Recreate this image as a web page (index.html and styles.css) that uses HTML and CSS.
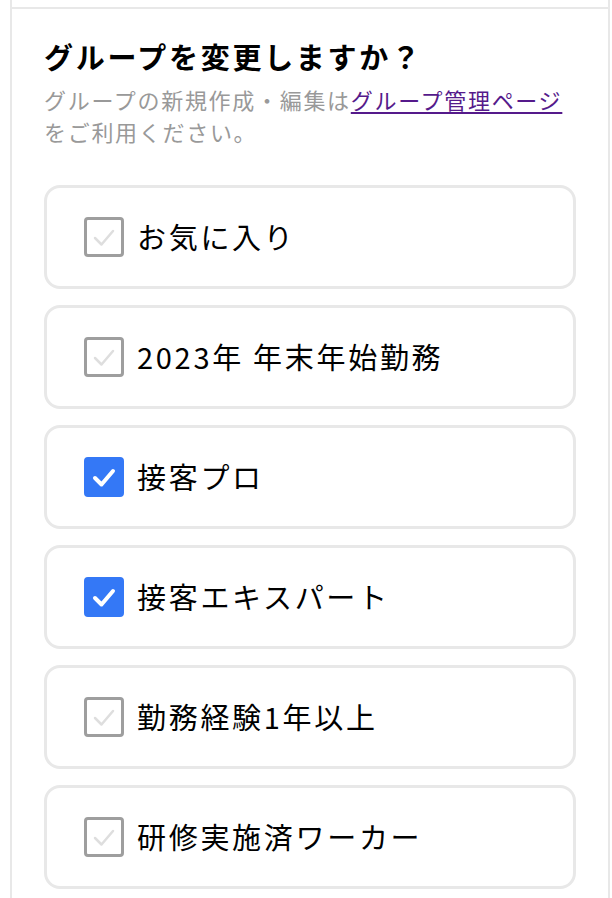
FILE: index.html
```html
<!DOCTYPE html>
<html lang="ja">
<head>
<meta charset="utf-8">
<title>グループを変更しますか？</title>
<link rel="stylesheet" href="styles.css">
</head>
<body>
<div class="frame">
  <section class="panel">
    <h1 class="title">グループを変更しますか？</h1>
    <p class="desc">グループの新規作成・編集は<a class="link" href="#">グループ管理ページ</a>をご利用ください。</p>
    <ul class="groups">
      <li class="card">
        <span class="box"><svg viewBox="0 0 40 40"><path d="M11 21 L17.5 27.5 L29 14" /></svg></span>
        <span class="label">お気に入り</span>
      </li>
      <li class="card">
        <span class="box"><svg viewBox="0 0 40 40"><path d="M11 21 L17.5 27.5 L29 14" /></svg></span>
        <span class="label">2023年 年末年始勤務</span>
      </li>
      <li class="card">
        <span class="box checked"><svg viewBox="0 0 40 40"><path d="M11 21 L17.5 27.5 L29 14" /></svg></span>
        <span class="label">接客プロ</span>
      </li>
      <li class="card">
        <span class="box checked"><svg viewBox="0 0 40 40"><path d="M11 21 L17.5 27.5 L29 14" /></svg></span>
        <span class="label">接客エキスパート</span>
      </li>
      <li class="card">
        <span class="box"><svg viewBox="0 0 40 40"><path d="M11 21 L17.5 27.5 L29 14" /></svg></span>
        <span class="label">勤務経験1年以上</span>
      </li>
      <li class="card">
        <span class="box"><svg viewBox="0 0 40 40"><path d="M11 21 L17.5 27.5 L29 14" /></svg></span>
        <span class="label">研修実施済ワーカー</span>
      </li>
    </ul>
  </section>
</div>
</body>
</html>
```

FILE: styles.css
```css
* { box-sizing: border-box; }
html, body {
  margin: 0;
  padding: 0;
  background: #fff;
}
body {
  font-family: "Noto Sans CJK JP", "Noto Sans", sans-serif;
  color: #000;
  overflow: hidden;
}
.frame {
  margin-left: 10px;
  width: 600px;
  min-height: 898px;
  border-left: 2px solid #e8e8e8;
  border-right: 2px solid #e8e8e8;
  padding-top: 7px;
}
.panel {
  border-top: 2px solid #e8e8e8;
  padding: 27px 32px 0;
}
.title {
  margin: 0;
  font-size: 29px;
  line-height: 40px;
  font-weight: 700;
  letter-spacing: 2.7px;
}
.desc {
  margin: 7px 0 0;
  font-size: 22px;
  line-height: 32px;
  color: #999;
  letter-spacing: 1.7px;
}
.link {
  color: #551a8b;
  text-decoration: underline;
  text-underline-offset: 3px;
}
.groups {
  list-style: none;
  margin: 38px 0 0;
  padding: 0;
  display: flex;
  flex-direction: column;
  gap: 16px;
}
.card {
  height: 104px;
  border: 3px solid #e8e8e8;
  border-radius: 16px;
  display: flex;
  align-items: center;
  padding-left: 37px;
  gap: 13px;
}
.box {
  width: 40px;
  height: 40px;
  border: 3px solid #9e9e9e;
  border-radius: 4px;
  display: flex;
  align-items: center;
  justify-content: center;
  flex: none;
  background: #fff;
}
.box svg {
  width: 40px;
  height: 40px;
  flex: none;
}
.box path {
  fill: none;
  stroke: #dedede;
  stroke-width: 2.5;
  stroke-linecap: round;
  stroke-linejoin: round;
}
.box.checked {
  background: #3478f6;
  border-color: #3478f6;
}
.box.checked path {
  stroke: #fff;
  stroke-width: 4;
}
.label {
  font-size: 29px;
  line-height: 40px;
  letter-spacing: 2.7px;
  margin-top: -3px;
}
```
